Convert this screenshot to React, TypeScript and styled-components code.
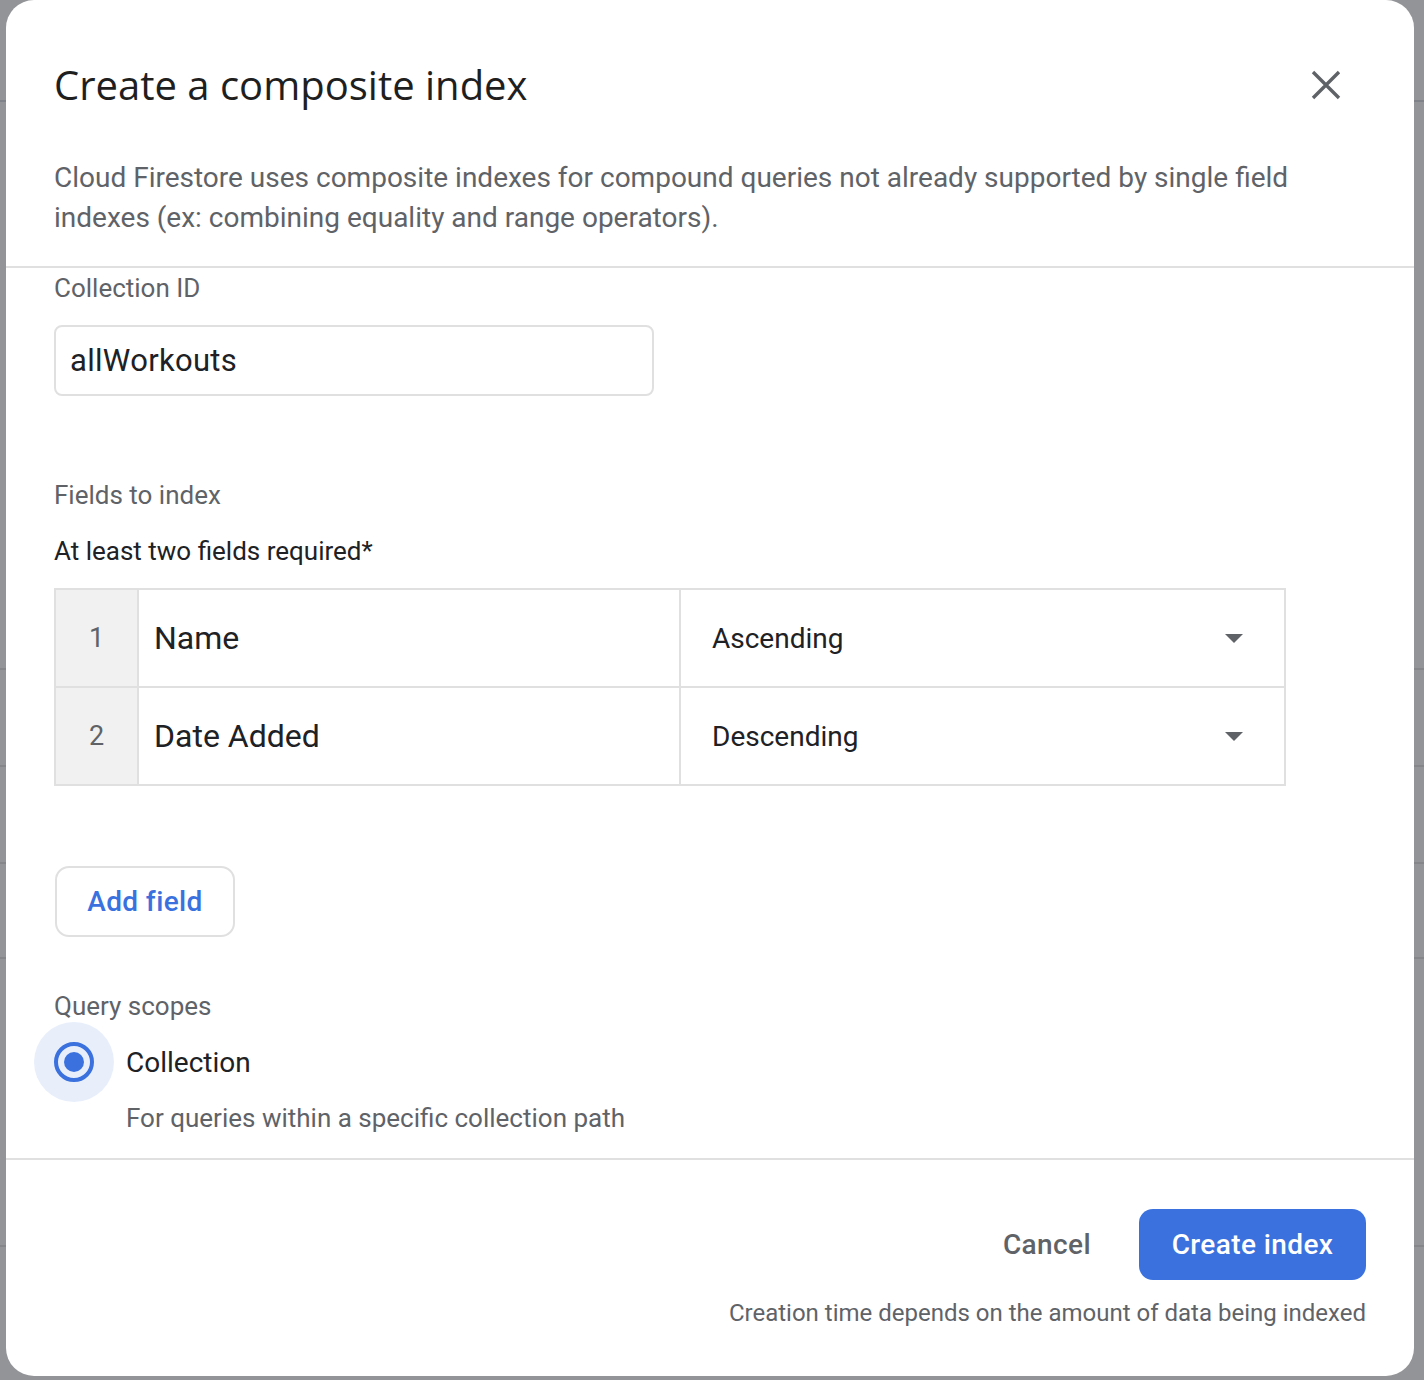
import React from "react";
import styled, { createGlobalStyle } from "styled-components";

const GlobalStyle = createGlobalStyle`
  html, body {
    margin: 0;
    padding: 0;
  }
  body {
    font-family: Roboto, "Liberation Sans", sans-serif;
    color: #202124;
  }
`;

const Backdrop = styled.div`
  min-height: 1380px;
  box-sizing: border-box;
  padding: 0 10px 4px 6px;
  background-color: #939497;
  background-image: linear-gradient(#80828a, #80828a), linear-gradient(#85868a, #85868a),
    linear-gradient(#85868a, #85868a), linear-gradient(#85868a, #85868a),
    linear-gradient(#85868a, #85868a), linear-gradient(#85868a, #85868a);
  background-size: 100% 2px;
  background-repeat: no-repeat;
  background-position: 0 100px, 0 668px, 0 765px, 0 862px, 0 957px, 0 1245px;
`;

const Dialog = styled.section`
  width: 1408px;
  height: 1376px;
  box-sizing: border-box;
  background: #fff;
  border-radius: 28px;
  display: flex;
  flex-direction: column;
  overflow: hidden;
`;

const Header = styled.header`
  padding: 59px 48px 0 48px;
  border-bottom: 2px solid #e0e0e0;
`;

const TitleRow = styled.div`
  display: flex;
  align-items: center;
  justify-content: space-between;
`;

const Title = styled.h1`
  margin: 0;
  font-family: "Open Sans", Roboto, sans-serif;
  font-size: 40px;
  font-weight: 400;
  color: #1f1f1f;
  line-height: 52px;
`;

const CloseButton = styled.button`
  border: none;
  background: none;
  padding: 0;
  margin-right: 20px;
  width: 40px;
  height: 40px;
  display: flex;
  align-items: center;
  justify-content: center;
  cursor: pointer;
`;

const Description = styled.p`
  margin: 47px 0 0;
  padding-bottom: 28px;
  font-size: 28px;
  line-height: 40px;
  color: #5f6368;
`;

const Body = styled.div`
  flex: 1;
  padding: 3px 48px 0 48px;
  display: flex;
  flex-direction: column;
  border-bottom: 2px solid #e0e0e0;
`;

const Label = styled.div<{ $top?: number }>`
  margin-top: ${({ $top }) => $top ?? 0}px;
  font-size: 26px;
  line-height: 34px;
  color: #5f6368;
`;

const Input = styled.div`
  margin-top: 20px;
  width: 600px;
  height: 71px;
  box-sizing: border-box;
  border: 2px solid #e0e0e0;
  border-radius: 8px;
  padding: 0 14px;
  display: flex;
  align-items: center;
  font-size: 31px;
  letter-spacing: 0.3px;
  color: #202124;
`;

const Hint = styled.div`
  margin-top: 22px;
  font-size: 26px;
  line-height: 34px;
  color: #202124;
`;

const Table = styled.div`
  margin-top: 20px;
  width: 1232px;
  border: 2px solid #e0e0e0;
  display: grid;
  grid-template-columns: 81px 542px 1fr;
  box-sizing: border-box;
`;

const Cell = styled.div<{ $first?: boolean }>`
  display: flex;
  align-items: center;
  box-sizing: border-box;
  border-top: ${({ $first }) => ($first ? "none" : "2px solid #e0e0e0")};
  border-left: 2px solid #e0e0e0;
  height: ${({ $first }) => ($first ? 96 : 98)}px;
  &:nth-child(3n + 1) {
    border-left: none;
  }
`;

const IndexCell = styled(Cell)`
  background: #f1f1f1;
  justify-content: center;
  font-size: 27px;
  color: #5f6368;
`;

const FieldCell = styled(Cell)`
  padding-left: 15px;
  font-size: 32px;
  color: #202124;
`;

const OrderCell = styled(Cell)`
  padding: 0 41px 0 31px;
  justify-content: space-between;
  font-size: 28px;
  color: #202124;
`;

const OutlineButton = styled.button`
  margin-top: 80px;
  margin-left: 1px;
  align-self: flex-start;
  width: 180px;
  height: 71px;
  box-sizing: border-box;
  border: 2px solid #e0e0e0;
  border-radius: 14px;
  background: #fff;
  font-family: Roboto, sans-serif;
  font-size: 28px;
  font-weight: 500;
  letter-spacing: 0.4px;
  color: #3a71de;
`;

const RadioRow = styled.div`
  display: flex;
  align-items: center;
  margin-left: -20px;
  margin-top: -1px;
`;

const RadioHalo = styled.div`
  width: 80px;
  height: 80px;
  border-radius: 50%;
  background: #e8effb;
  display: flex;
  align-items: center;
  justify-content: center;
`;

const RadioRing = styled.div`
  width: 40px;
  height: 40px;
  box-sizing: border-box;
  border: 4px solid #3a71de;
  border-radius: 50%;
  display: flex;
  align-items: center;
  justify-content: center;
  &::after {
    content: "";
    width: 20px;
    height: 20px;
    border-radius: 50%;
    background: #3a71de;
  }
`;

const RadioLabel = styled.span`
  margin-left: 12px;
  font-size: 28px;
  color: #202124;
`;

const RadioNote = styled.div`
  margin-left: 72px;
  margin-top: -1px;
  font-size: 26px;
  line-height: 34px;
  color: #5f6368;
`;

const Footer = styled.footer`
  height: 216px;
  box-sizing: border-box;
  padding: 49px 48px 0 48px;
  display: flex;
  flex-direction: column;
  align-items: flex-end;
`;

const Actions = styled.div`
  display: flex;
  align-items: center;
  gap: 24px;
`;

const TextButton = styled.button`
  border: none;
  background: none;
  height: 71px;
  padding: 0 24px;
  font-family: Roboto, sans-serif;
  font-size: 28px;
  font-weight: 500;
  letter-spacing: 0.4px;
  color: #5f6368;
`;

const PrimaryButton = styled.button`
  border: none;
  height: 71px;
  width: 227px;
  border-radius: 14px;
  background: #3a71de;
  font-family: Roboto, sans-serif;
  font-size: 28px;
  font-weight: 500;
  letter-spacing: 0.4px;
  color: #fff;
`;

const FooterNote = styled.div`
  margin-top: 16px;
  font-size: 24px;
  line-height: 34px;
  color: #5f6368;
`;

const Caret = () => (
  <svg width="18" height="9" viewBox="0 0 18 9">
    <path d="M0 0h18L9 9z" fill="#5f6368" />
  </svg>
);

const fields = [
  { n: 1, name: "Name", order: "Ascending" },
  { n: 2, name: "Date Added", order: "Descending" },
];

export default function App() {
  return (
    <>
      <GlobalStyle />
      <Backdrop>
        <Dialog>
          <Header>
            <TitleRow>
              <Title>Create a composite index</Title>
              <CloseButton aria-label="Close">
                <svg width="30" height="30" viewBox="0 0 30 30">
                  <path d="M2 2L28 28M28 2L2 28" stroke="#5f6368" strokeWidth="3.4" />
                </svg>
              </CloseButton>
            </TitleRow>
            <Description>
              Cloud Firestore uses composite indexes for compound queries not already supported by single field
              indexes (ex: combining equality and range operators).
            </Description>
          </Header>
          <Body>
            <Label>Collection ID</Label>
            <Input>allWorkouts</Input>
            <Label $top={82}>Fields to index</Label>
            <Hint>At least two fields required*</Hint>
            <Table>
              {fields.map((f, i) => (
                <React.Fragment key={f.n}>
                  <IndexCell $first={i === 0}>{f.n}</IndexCell>
                  <FieldCell $first={i === 0}>{f.name}</FieldCell>
                  <OrderCell $first={i === 0}>
                    {f.order}
                    <Caret />
                  </OrderCell>
                </React.Fragment>
              ))}
            </Table>
            <OutlineButton>Add field</OutlineButton>
            <Label $top={52}>Query scopes</Label>
            <RadioRow>
              <RadioHalo>
                <RadioRing />
              </RadioHalo>
              <RadioLabel>Collection</RadioLabel>
            </RadioRow>
            <RadioNote>For queries within a specific collection path</RadioNote>
          </Body>
          <Footer>
            <Actions>
              <TextButton>Cancel</TextButton>
              <PrimaryButton>Create index</PrimaryButton>
            </Actions>
            <FooterNote>Creation time depends on the amount of data being indexed</FooterNote>
          </Footer>
        </Dialog>
      </Backdrop>
    </>
  );
}
